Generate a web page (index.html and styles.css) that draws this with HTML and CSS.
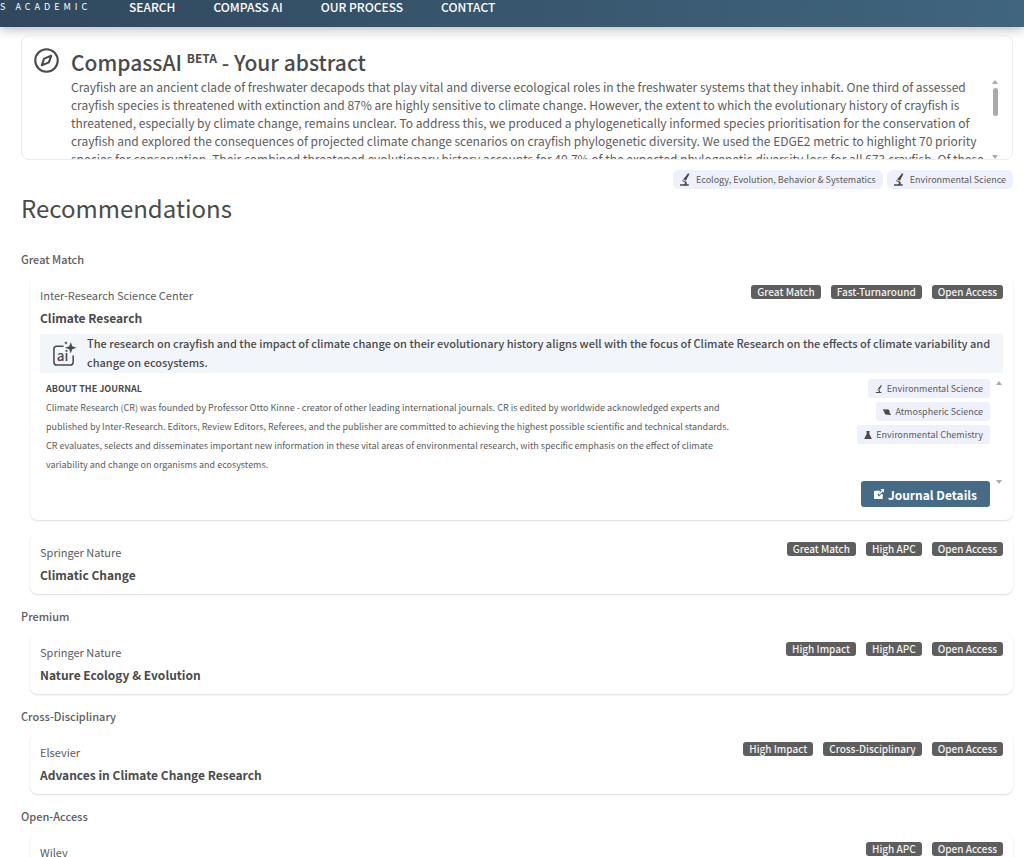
FILE: index.html
```html
<!DOCTYPE html>
<html lang="en">
<head>
    <meta charset="UTF-8">
    <meta name="viewport" content="width=device-width, initial-scale=1.0">
    <title>CompassAI - Recommendations</title>
    <link rel="stylesheet" href="styles.css">
</head>
<body>
    <!-- shared icons -->
    <svg class="sprite" aria-hidden="true">
        <symbol id="microscope" viewBox="0 0 16 20">
            <path d="M13 0l2 1-5.500 11-4.500-2z"/>
            <path d="M3.500 11l6 2.500-.5 1.500-6-2.500z"/>
            <path d="M10 13c1 2 1 3 .5 4.500H14V20H0v-2.500h6c1.500-.5 2.500-2 2-4z"/>
        </symbol>
        <symbol id="planet" viewBox="0 0 18 16">
            <circle cx="9" cy="8" r="6"/>
            <path d="M0 3c2-2 5-1 7 1l-4 3.500C1 6 0 4.500 0 3zM13 9l5 4c0 1.500-2 2-4 1.500l-4-2z"/>
        </symbol>
        <symbol id="flask" viewBox="0 0 16 18">
            <path d="M4.500 0h7v2H11v5l5 9.500V18H0v-1.500L5 7V2h-.5z"/>
        </symbol>
    </svg>

    <header class="topbar">
        <span class="brand">S ACADEMIC</span>
        <nav class="menu">
            <a href="#search">SEARCH</a>
            <a href="#compass">COMPASS AI</a>
            <a href="#process">OUR PROCESS</a>
            <a href="#contact">CONTACT</a>
        </nav>
    </header>

    <main class="page">
        <section class="abstract">
            <svg class="compass" viewBox="0 0 24 24" fill="none" stroke="#4a4a4a" stroke-width="2" stroke-linejoin="round" aria-hidden="true">
                <circle cx="12" cy="12" r="10.800"/>
                <path d="M16.500 7.500l-2.200 6.300-6.800 2.700 2.200-6.300z"/>
            </svg>
            <div class="abstract-body">
                <h1>CompassAI <sup>BETA</sup> - Your abstract</h1>
                <div class="abstract-scroll">
                    <p>Crayfish are an ancient clade of freshwater decapods that play vital and diverse ecological roles in the freshwater systems that they inhabit. One third of assessed crayfish species is threatened with extinction and 87% are highly sensitive to climate change. However, the extent to which the evolutionary history of crayfish is threatened, especially by climate change, remains unclear. To address this, we produced a phylogenetically informed species prioritisation for the conservation of crayfish and explored the consequences of projected climate change scenarios on crayfish phylogenetic diversity. We used the EDGE2 metric to highlight 70 priority species for conservation. Their combined threatened evolutionary history accounts for 40.7% of the expected phylogenetic diversity loss for all 673 crayfish. Of these</p>
                    <div class="scrollbar">
                        <span class="arrow-up"></span>
                        <span class="thumb"></span>
                        <span class="arrow-down"></span>
                    </div>
                </div>
            </div>
        </section>

        <div class="fields">
            <span class="tag"><svg><use href="#microscope"/></svg>Ecology, Evolution, Behavior &amp; Systematics</span>
            <span class="tag"><svg><use href="#microscope"/></svg>Environmental Science</span>
        </div>

        <h2>Recommendations</h2>

        <h3>Great Match</h3>
        <article class="card">
            <div class="card-head">
                <div>
                    <p class="publisher">Inter-Research Science Center</p>
                    <h4>Climate Research</h4>
                </div>
                <div class="badges">
                    <span>Great Match</span>
                    <span>Fast-Turnaround</span>
                    <span>Open Access</span>
                </div>
            </div>
            <div class="reason">
                <svg viewBox="0 0 26 27" aria-hidden="true">
                    <path d="M12 5.500H5a3 3 0 0 0-3 3V22a3 3 0 0 0 3 3h14a3 3 0 0 0 3-3v-7" fill="none" stroke="#4a4a4a" stroke-width="1.600"/>
                    <path d="M19.500 1l1.500 4.500L25.500 7 21 8.500 19.500 13 18 8.500 13.500 7 18 5.500z" fill="#4a4a4a"/>
                    <path d="M14.500 0l.6 1.400 1.400.6-1.400.6-.6 1.400-.6-1.400L12.500 2l1.400-.6z" fill="#4a4a4a"/>
                    <text x="5" y="20.500" class="ai-label">ai</text>
                </svg>
                <p>The research on crayfish and the impact of climate change on their evolutionary history aligns well with the focus of Climate Research on the effects of climate variability and change on ecosystems.</p>
            </div>
            <div class="details">
                <div class="about">
                    <h5>ABOUT THE JOURNAL</h5>
                    <p>Climate Research (CR) was founded by Professor Otto Kinne - creator of other leading international journals. CR is edited by worldwide acknowledged experts and published by Inter-Research. Editors, Review Editors, Referees, and the publisher are committed to achieving the highest possible scientific and technical standards. CR evaluates, selects and disseminates important new information in these vital areas of environmental research, with specific emphasis on the effect of climate variability and change on organisms and ecosystems.</p>
                </div>
                <div class="side">
                    <div class="topics">
                        <span class="tag small"><svg><use href="#microscope"/></svg>Environmental Science</span>
                        <span class="tag small"><svg><use href="#planet"/></svg>Atmospheric Science</span>
                        <span class="tag small"><svg><use href="#flask"/></svg>Environmental Chemistry</span>
                    </div>
                    <button class="btn" type="button">
                        <svg viewBox="0 0 12 12" aria-hidden="true">
                            <path d="M1 2h6v2l-3 3 2 2 3-3h1.500v5a1 1 0 0 1-1 1H1a1 1 0 0 1-1-1V3a1 1 0 0 1 1-1z"/>
                            <path d="M7.500 0H12v4.500l-1.500-1.500-4 4-1.300-1.300 4-4z"/>
                        </svg>
                        Journal Details
                    </button>
                </div>
                <div class="scrollbar">
                    <span class="arrow-up"></span>
                    <span class="arrow-down"></span>
                </div>
            </div>
        </article>

        <article class="card">
            <div class="card-head">
                <div>
                    <p class="publisher">Springer Nature</p>
                    <h4>Climatic Change</h4>
                </div>
                <div class="badges">
                    <span>Great Match</span>
                    <span>High APC</span>
                    <span>Open Access</span>
                </div>
            </div>
        </article>

        <h3>Premium</h3>
        <article class="card">
            <div class="card-head">
                <div>
                    <p class="publisher">Springer Nature</p>
                    <h4>Nature Ecology &amp; Evolution</h4>
                </div>
                <div class="badges">
                    <span>High Impact</span>
                    <span>High APC</span>
                    <span>Open Access</span>
                </div>
            </div>
        </article>

        <h3>Cross-Disciplinary</h3>
        <article class="card">
            <div class="card-head">
                <div>
                    <p class="publisher">Elsevier</p>
                    <h4>Advances in Climate Change Research</h4>
                </div>
                <div class="badges">
                    <span>High Impact</span>
                    <span>Cross-Disciplinary</span>
                    <span>Open Access</span>
                </div>
            </div>
        </article>

        <h3>Open-Access</h3>
        <article class="card">
            <div class="card-head">
                <div>
                    <p class="publisher">Wiley</p>
                </div>
                <div class="badges">
                    <span>High APC</span>
                    <span>Open Access</span>
                </div>
            </div>
        </article>
    </main>
</body>
</html>
```
FILE: styles.css
```css
* {
    box-sizing: border-box;
}
body {
    margin: 0;
    background: #fff;
    color: #4a4a4a;
    font-family: "Noto Sans CJK SC", "Noto Sans", sans-serif;
    font-size: 12px;
    overflow: hidden;
}
h1, h2, h3, h4, h5, p {
    margin: 0;
}
.sprite {
    display: none;
}

/* top bar */
.topbar {
    display: flex;
    height: 27px;
    color: #fff;
    background: linear-gradient(100deg, #30485d, #40657f);
    box-shadow: 0 2px 12px rgba(0, 0, 0, 0.3);
}
.brand {
    width: 129px;
    font-size: 9px;
    line-height: 13px;
    letter-spacing: 4px;
    white-space: nowrap;
}
.menu {
    display: flex;
    gap: 38px;
    line-height: 14px;
}
.menu a {
    color: #fff;
    font-weight: 500;
    text-decoration: none;
}

.page {
    padding: 8px 11px 0 21px;
}

/* abstract */
.abstract {
    display: flex;
    gap: 12px;
    height: 125px;
    padding: 12px 12px 0;
    border: 1px solid #ececec;
    border-radius: 8px;
    overflow: hidden;
}
.compass {
    flex: none;
    width: 25px;
    height: 25px;
}
.abstract-body {
    flex: 1;
}
.abstract h1 {
    margin-bottom: 2px;
    font-size: 21px;
    font-weight: 500;
    line-height: 28px;
}
.abstract sup {
    font-size: 12px;
    font-weight: 700;
    line-height: 0;
}
.abstract-scroll {
    display: flex;
    height: 81px;
}
.abstract-scroll p {
    flex: 1;
    color: #5c5c5c;
    line-height: 18px;
}
.scrollbar {
    display: flex;
    flex-direction: column;
    align-items: center;
    width: 10px;
    padding-top: 2px;
}
.arrow-up, .arrow-down {
    border: 3px solid transparent;
}
.arrow-up {
    border-top: 0;
    border-bottom: 4px solid #aaa;
}
.arrow-down {
    margin-top: auto;
    border-bottom: 0;
    border-top: 4px solid #aaa;
}
.thumb {
    width: 5px;
    height: 28px;
    margin-top: 4px;
    border-radius: 3px;
    background: #aaa;
}

/* field tags */
.fields {
    display: flex;
    justify-content: flex-end;
    gap: 4px;
    margin-top: 10px;
}
.tag {
    display: flex;
    align-items: center;
    gap: 6px;
    padding: 0 7px;
    border-radius: 6px;
    background: #eef1fb;
    color: #5c5c5c;
    font-size: 9px;
    line-height: 19px;
}
.tag svg {
    width: 10px;
    height: 13px;
    fill: #4a4a4a;
}
.tag.small {
    gap: 4px;
    border-radius: 3px;
}
.tag.small svg {
    width: 8px;
    height: 8px;
}

h2 {
    font-size: 24px;
    font-weight: 400;
    line-height: 38px;
}
h3 {
    padding: 12px 0 7px;
    color: #5c5c5c;
    font-size: 11px;
    font-weight: 500;
    line-height: 20px;
}
h2 + h3 {
    margin-top: 10px;
}

/* journal cards */
.card {
    margin-left: 9px;
    padding: 8px 10px 7px;
    border-radius: 8px;
    box-shadow: 0 1px 2px rgba(0, 0, 0, 0.14);
}
.card + .card {
    margin-top: 13px;
}
.card-head {
    display: flex;
    justify-content: space-between;
}
.publisher {
    color: #5c5c5c;
    font-size: 11px;
    line-height: 23px;
}
h4 {
    padding-bottom: 2px;
    font-size: 12px;
    line-height: 21px;
}
.badges {
    display: flex;
    align-items: flex-start;
    gap: 10px;
    padding-top: 1px;
}
.badges span {
    padding: 0 6px;
    border-radius: 3px;
    background: #5e5e5e;
    color: #f2f2f2;
    font-size: 10px;
    font-weight: 500;
    line-height: 14px;
}
.reason {
    display: flex;
    gap: 10px;
    margin-top: 4px;
    padding: 0 12px;
    min-height: 39px;
    background: #f2f6fa;
    font-size: 11px;
    font-weight: 500;
    line-height: 19px;
}
.reason svg {
    flex: none;
    width: 25px;
    height: 26px;
    margin-top: 7px;
}
.ai-label {
    font-size: 14px;
    font-weight: 500;
    fill: #4a4a4a;
}
.details {
    display: flex;
    margin-top: 6px;
    padding-left: 6px;
}
.about {
    flex: 1;
    font-size: 9px;
    line-height: 19px;
}
.about p {
    max-width: 690px;
    color: #5c5c5c;
}
.about h5 {
    font-size: 9px;
}
.side {
    display: flex;
    flex-direction: column;
    align-items: flex-end;
    padding-bottom: 6px;
}
.topics {
    display: flex;
    flex-direction: column;
    align-items: flex-end;
    gap: 4px;
}
.btn {
    display: flex;
    align-items: center;
    gap: 4px;
    height: 26px;
    margin-top: 37px;
    padding: 0 13px;
    border: 0;
    border-radius: 3px;
    background: #466b86;
    color: #fff;
    font-family: inherit;
    font-size: 12px;
    font-weight: 700;
}
.btn svg {
    width: 10px;
    height: 10px;
    fill: #fff;
}
.details .scrollbar {
    width: 8px;
    height: 105px;
    margin-left: 5px;
}
```
